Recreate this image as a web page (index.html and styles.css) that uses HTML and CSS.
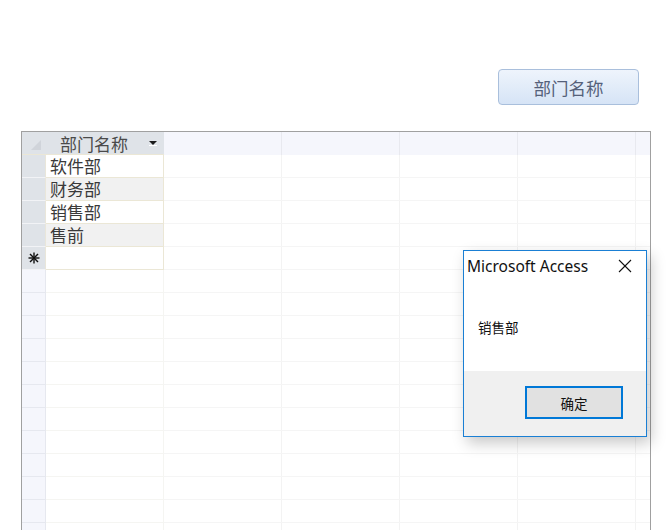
FILE: index.html
```html
<!DOCTYPE html>
<html lang="zh-CN">
<head>
    <meta charset="UTF-8">
    <title>部门名称</title>
    <link rel="stylesheet" href="styles.css">
</head>
<body>
    <div class="toolbar">
        <button class="field-btn">部门名称</button>
    </div>

    <div class="sheet">
        <div class="row head">
            <div class="sel corner">
                <svg width="23" height="22" viewBox="0 0 23 22"><polygon points="18,8 18,18 8,18" fill="#d0d4da"/></svg>
            </div>
            <div class="cell col-head">
                <span>部门名称</span>
                <svg class="drop" width="10" height="6" viewBox="0 0 10 6"><polygon points="1,1 9,1 5,5" fill="#1b1b1b"/><line x1="1" y1="5.5" x2="9" y2="5.5" stroke="#fff"/></svg>
            </div>
            <div class="rest"></div>
        </div>
        <div class="row"><div class="sel"></div><div class="cell">软件部</div><div class="rest"></div></div>
        <div class="row alt"><div class="sel"></div><div class="cell">财务部</div><div class="rest"></div></div>
        <div class="row"><div class="sel"></div><div class="cell">销售部</div><div class="rest"></div></div>
        <div class="row alt"><div class="sel"></div><div class="cell">售前</div><div class="rest"></div></div>
        <div class="row new">
            <div class="sel">
                <svg width="12" height="12" viewBox="0 0 12 12" stroke="#111" stroke-width="1.4"><line x1="6" y1="0.5" x2="6" y2="11.5"/><line x1="0.5" y1="6" x2="11.5" y2="6"/><line x1="2" y1="2" x2="10" y2="10"/><line x1="10" y1="2" x2="2" y2="10"/></svg>
            </div>
            <div class="cell"></div><div class="rest"></div>
        </div>
        <div class="row empty"><div class="sel"></div><div class="cell"></div><div class="rest"></div></div>
        <div class="row empty"><div class="sel"></div><div class="cell"></div><div class="rest"></div></div>
        <div class="row empty"><div class="sel"></div><div class="cell"></div><div class="rest"></div></div>
        <div class="row empty"><div class="sel"></div><div class="cell"></div><div class="rest"></div></div>
        <div class="row empty"><div class="sel"></div><div class="cell"></div><div class="rest"></div></div>
        <div class="row empty"><div class="sel"></div><div class="cell"></div><div class="rest"></div></div>
        <div class="row empty"><div class="sel"></div><div class="cell"></div><div class="rest"></div></div>
        <div class="row empty"><div class="sel"></div><div class="cell"></div><div class="rest"></div></div>
        <div class="row empty"><div class="sel"></div><div class="cell"></div><div class="rest"></div></div>
        <div class="row empty"><div class="sel"></div><div class="cell"></div><div class="rest"></div></div>
        <div class="row empty"><div class="sel"></div><div class="cell"></div><div class="rest"></div></div>
        <div class="row empty"><div class="sel"></div><div class="cell"></div><div class="rest"></div></div>
    </div>

    <div class="dialog">
        <div class="dialog-title">
            <span>Microsoft Access</span>
            <svg width="14" height="14" viewBox="0 0 14 14" stroke="#111" stroke-width="1.1"><line x1="1" y1="1" x2="13" y2="13"/><line x1="13" y1="1" x2="1" y2="13"/></svg>
        </div>
        <div class="dialog-body">销售部</div>
        <div class="dialog-foot">
            <button class="ok-btn">确定</button>
        </div>
    </div>
</body>
</html>
```

FILE: styles.css
```css
body {
    margin: 0;
    height: 530px;
    overflow: hidden;
    background: white;
    font-family: "Noto Sans CJK SC", sans-serif;
}
.toolbar {
    display: flex;
    justify-content: flex-end;
    padding: 69px 28px 0 0;
}
.field-btn {
    width: 141px;
    height: 36px;
    border: 1px solid #a9bfdc;
    border-radius: 4px;
    background: linear-gradient(#eef4fc, #d6e4f6);
    color: #55617a;
    font-family: "Noto Sans CJK SC", sans-serif;
    font-size: 17.5px;
    padding: 0;
}
.sheet {
    margin: 26px 16px 0 21px;
    border: 1px solid #a0a0a0;
    border-bottom: none;
}
.row {
    display: flex;
    height: 23px;
    background: white;
}
.sel {
    width: 24px;
    flex: none;
    background: #dfe3e8;
    border-bottom: 1px solid #f2f3f6;
    border-right: 1px solid #e9e6da;
    box-sizing: border-box;
    display: flex;
    align-items: center;
    justify-content: center;
}
.cell {
    width: 118px;
    flex: none;
    box-sizing: border-box;
    border-right: 1px solid #ebe7d6;
    border-bottom: 1px solid #ebe7d6;
    padding-left: 4px;
    font-size: 17px;
    line-height: 21px;
    color: #3a3a3a;
}
.rest {
    flex: 1;
    border-bottom: 1px solid #f5f5f5;
    background: repeating-linear-gradient(to right, transparent 0 117px, #f3f3f3 117px 118px);
}
.alt .cell {
    background: #f1f1f1;
}
.head .sel,
.head .cell {
    background: #dfe3e8;
    border-bottom: 1px solid #ebe7d6;
    border-right: none;
}
.corner {
    align-items: flex-start;
}
.col-head {
    display: flex;
    align-items: center;
    padding-left: 14px;
    color: #4a4a4a;
}
.col-head span {
    flex: 1;
}
.drop {
    margin-right: 6px;
}
.head .rest {
    background: #f5f6fc repeating-linear-gradient(to right, transparent 0 117px, #e8e9ef 117px 118px);
    border-bottom: none;
}
.empty .sel {
    background: #f5f6fc;
    border-bottom: 1px solid #e6e8ef;
    border-right: 1px solid #e6e8ef;
}
.empty .cell {
    border-color: #f5f5f2;
}
.dialog {
    position: absolute;
    left: 463px;
    top: 250px;
    width: 184px;
    height: 187px;
    box-sizing: border-box;
    border: 1px solid #1a7fd4;
    background: #f0f0f0;
    box-shadow: 4px 6px 14px rgba(0,0,0,0.22);
    display: flex;
    flex-direction: column;
    font-family: "Noto Sans", "Noto Sans CJK SC", sans-serif;
}
.dialog-title {
    background: white;
    height: 30px;
    display: flex;
    align-items: center;
    justify-content: space-between;
    padding: 0 14px 0 3px;
    font-size: 15.5px;
    color: #111;
}
.dialog-body {
    background: white;
    height: 90px;
    box-sizing: border-box;
    padding: 36px 0 0 14px;
    font-size: 13.5px;
    color: #111;
}
.dialog-foot {
    display: flex;
    justify-content: flex-end;
    padding: 15px 23px 0 0;
}
.ok-btn {
    width: 98px;
    height: 33px;
    border: 2px solid #0078d7;
    background: #e1e1e1;
    font-family: "Noto Sans CJK SC", sans-serif;
    font-size: 13.5px;
    color: #111;
    padding: 0;
}
```
